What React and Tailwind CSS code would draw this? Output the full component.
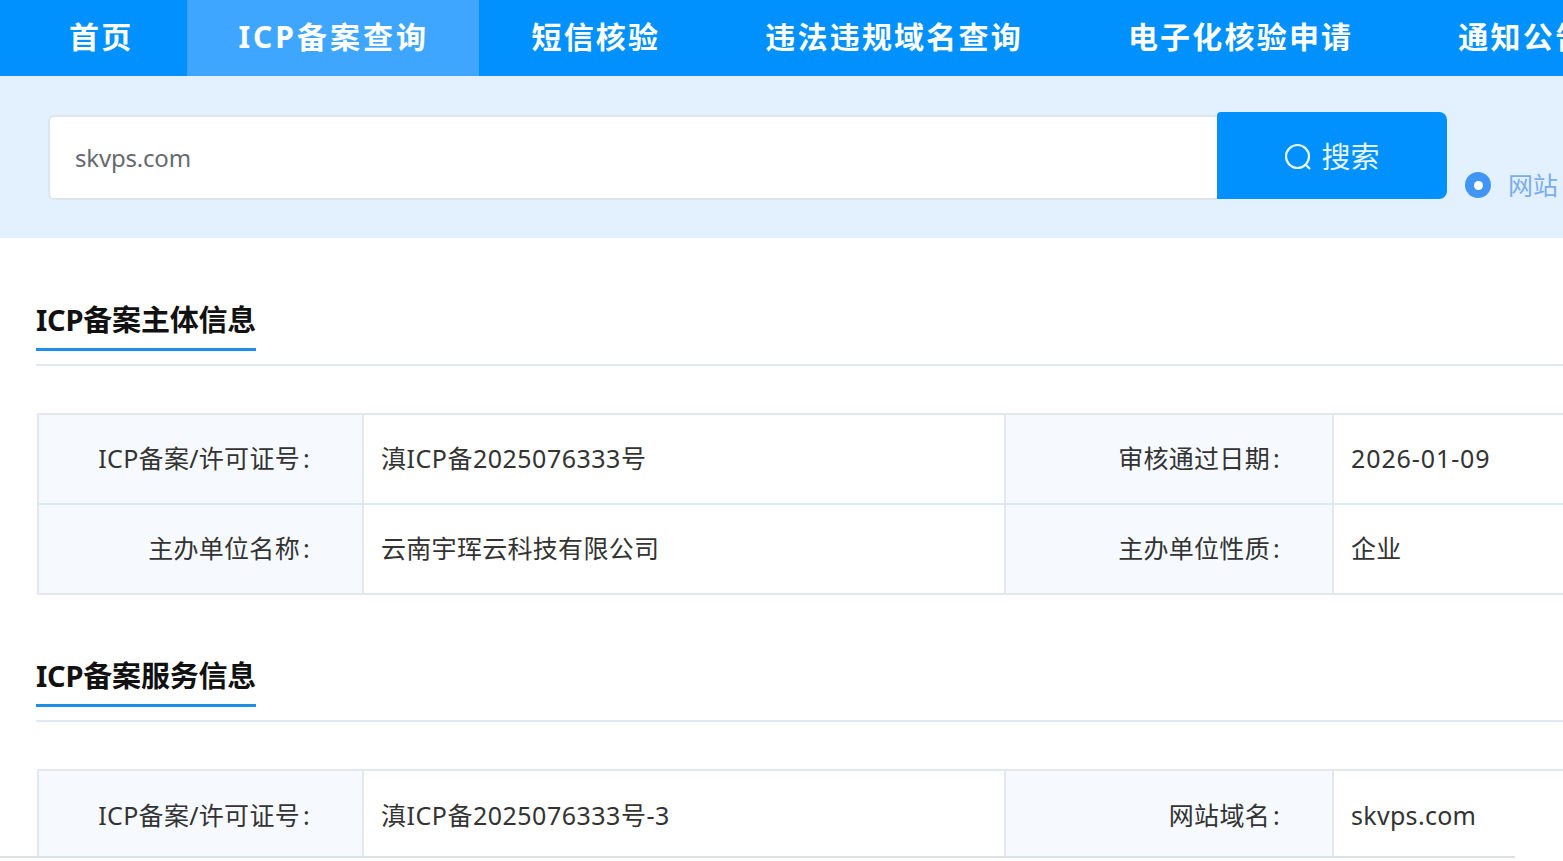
const nav = ["短信核验", "违法违规域名查询", "电子化核验申请", "通知公告"];

function Label({ text }) {
  return (
    <>
      {text}
      <span className="ml-[3px]">:</span>
    </>
  );
}

function Section({ title, rows, clipped }) {
  return (
    <section className="pl-9">
      <div className="border-b-2 border-[#dfe9f3] pb-[13px]">
        <h2 className="w-[220px] h-[66px] border-b-[3px] border-[#1e8fe6] text-[29px] leading-[70px] font-bold text-[#111] whitespace-nowrap tracking-[-0.2px]">{title}</h2>
      </div>
      <div className="mt-[47px] ml-px w-[1600px] border-t-2 border-l-2 border-[#e4e7ec] text-[25px] text-[#333] grid grid-cols-[325px_642px_328px_1fr]">
        {rows.map((r, i) => {
          const last = i === rows.length - 1;
          return (
            <div key={i} className="contents">
              <Cell label last={last} clipped={clipped}><Label text={r[0]} /></Cell>
              <Cell last={last} clipped={clipped}><span className={r[4]}>{r[1]}</span></Cell>
              <Cell label last={last} clipped={clipped}><Label text={r[2]} /></Cell>
              <Cell last={last} clipped={clipped}><span className={r[5]}>{r[3]}</span></Cell>
            </div>
          );
        })}
      </div>
    </section>
  );
}

function Cell({ label, last, children, clipped }) {
  const border = last ? (clipped ? "" : "border-b-2 border-b-[#e4e7ec]") : "border-b-2 border-b-[#dbe8f5]";
  return label ? (
    <div className={`h-[90px] flex items-center justify-end pr-[52px] bg-[#f6faff] border-r-2 border-r-[#e4e7ec] whitespace-nowrap tracking-[0.3px] ${border}`}>{children}</div>
  ) : (
    <div className={`h-[90px] flex items-center pl-[17px] border-r-2 border-r-[#e4e7ec] whitespace-nowrap tracking-[0.3px] ${border}`}>{children}</div>
  );
}

export default function App() {
  return (
    <div className="h-[861px] w-full overflow-hidden flex flex-col bg-white font-['Noto_Sans','Noto_Sans_CJK_SC',sans-serif]">
      <div className="flex-1 min-h-0 overflow-hidden">
        <nav className="h-[76px] bg-[#0091ff] flex pl-[18px] text-white text-[30px] font-bold tracking-[2.2px] whitespace-nowrap overflow-hidden">
          <a className="shrink-0 pl-[51px] pr-[54px] leading-[74px]">首页</a>
          <a className="shrink-0 pl-[51px] pr-[50px] leading-[74px] bg-[#3ea6ff] tracking-[3px]">ICP备案查询</a>
          {nav.map((n) => (
            <a key={n} className="shrink-0 px-[52.5px] leading-[74px]">{n}</a>
          ))}
        </nav>

        <div className="h-[162px] bg-[#e3f0fe] flex items-start pl-12 pt-9 overflow-hidden">
          <div className="mt-[3px] w-[1169px] h-[85px] shrink-0 bg-white border-2 border-r-0 border-[#dfe5ec] rounded-l-md flex items-center pl-[25px] text-[24px] text-[#666a70] tracking-[-0.2px]">
            skvps.com
          </div>
          <button className="w-[230px] h-[87px] shrink-0 bg-[#0091ff] rounded-r-lg rounded-tl-sm flex items-center justify-center gap-[9px] pt-[2px] text-[29px] text-[#e6f4ff]">
            <svg width="28" height="28" viewBox="0 0 28 28" fill="none" stroke="currentColor" strokeWidth="2.2" strokeLinecap="round">
              <circle cx="13.5" cy="13.5" r="11.5" />
              <path d="M22 22l3.5 3.5" />
            </svg>
            搜索
          </button>
          <div className="ml-[18px] mt-[60px] flex items-center gap-[17px] shrink-0">
            <span className="w-[26px] h-[26px] rounded-full bg-[#4196f5] flex items-center justify-center">
              <span className="w-[9px] h-[9px] rounded-full bg-white" />
            </span>
            <span className="text-[25px] text-[#7aaef0] leading-[26px] whitespace-nowrap">网站</span>
          </div>
        </div>

        <div className="pt-[47px] flex flex-col gap-[46px]">
          <Section
            title="ICP备案主体信息"
            rows={[
              ["ICP备案/许可证号", "滇ICP备2025076333号", "审核通过日期", "2026-01-09", "tracking-[0.5px]", "tracking-[0.9px]"],
              ["主办单位名称", "云南宇珲云科技有限公司", "主办单位性质", "企业", "", ""],
            ]}
          />
          <Section
            title="ICP备案服务信息"
            clipped
            rows={[["ICP备案/许可证号", "滇ICP备2025076333号-3", "网站域名", "skvps.com", "tracking-[0.5px]", ""]]}
          />
        </div>
      </div>
      <div className="h-[5px] w-[1515px] shrink-0 border-t-2 border-[#dcdfe3]" />
    </div>
  );
}
